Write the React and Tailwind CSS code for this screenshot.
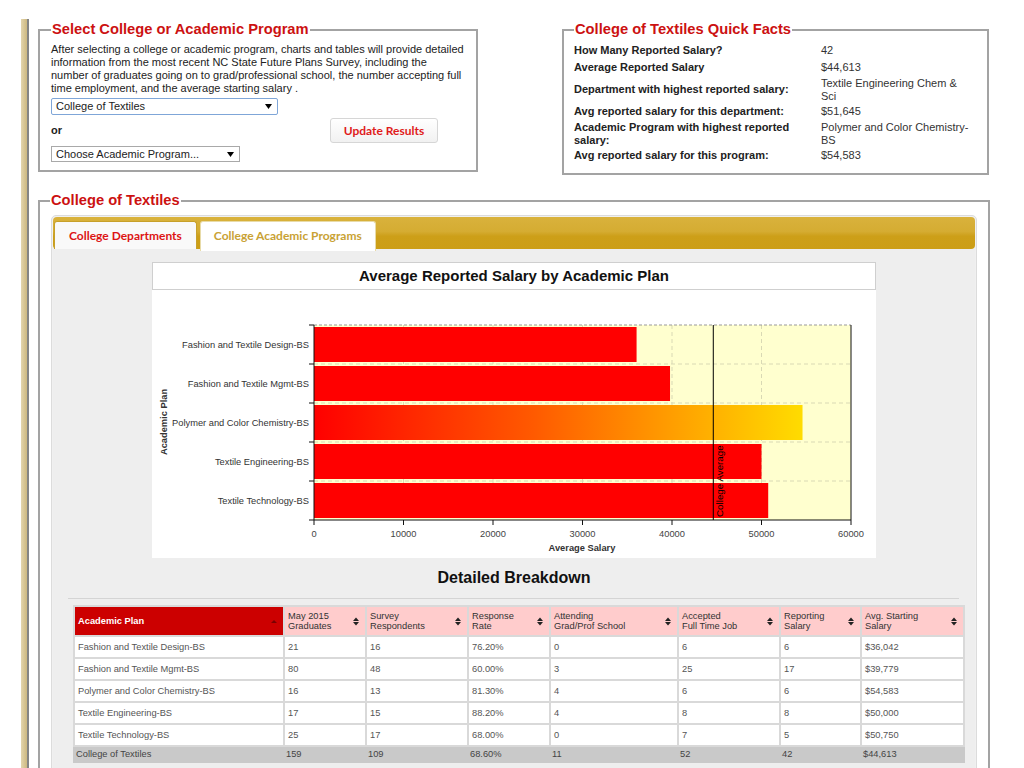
import React from "react";

const plans = [
  ["Fashion and Textile Design-BS", 36042],
  ["Fashion and Textile Mgmt-BS", 39779],
  ["Polymer and Color Chemistry-BS", 54583],
  ["Textile Engineering-BS", 50000],
  ["Textile Technology-BS", 50750],
];

const rows = [
  ["Fashion and Textile Design-BS", "21", "16", "76.20%", "0", "6", "6", "$36,042"],
  ["Fashion and Textile Mgmt-BS", "80", "48", "60.00%", "3", "25", "17", "$39,779"],
  ["Polymer and Color Chemistry-BS", "16", "13", "81.30%", "4", "6", "6", "$54,583"],
  ["Textile Engineering-BS", "17", "15", "88.20%", "4", "8", "8", "$50,000"],
  ["Textile Technology-BS", "25", "17", "68.00%", "0", "7", "5", "$50,750"],
];

const totals = ["College of Textiles", "159", "109", "68.60%", "11", "52", "42", "$44,613"];

const headers = [
  ["May 2015", "Graduates"],
  ["Survey", "Respondents"],
  ["Response", "Rate"],
  ["Attending", "Grad/Prof School"],
  ["Accepted", "Full Time Job"],
  ["Reporting", "Salary"],
  ["Avg. Starting", "Salary"],
];

const colWidths = [210, 82, 102, 82, 128, 102, 81, 103];

// [label, value, two-line row]
const facts = [
  ["How Many Reported Salary?", "42", false],
  ["Average Reported Salary", "$44,613", false],
  ["Department with highest reported salary:", "Textile Engineering Chem & Sci", true],
  ["Avg reported salary for this department:", "$51,645", false],
  ["Academic Program with highest reported salary:", "Polymer and Color Chemistry-BS", true],
  ["Avg reported salary for this program:", "$54,583", false],
];

function Arrow() {
  return (
    <svg width="7" height="5" viewBox="0 0 7 5">
      <polygon points="0,0 7,0 3.5,5" fill="#000" />
    </svg>
  );
}

function SortIcon() {
  return (
    <svg width="6" height="9" viewBox="0 0 6 9" className="shrink-0">
      <polygon points="0,4 3,0.5 6,4" fill="#222" />
      <polygon points="0,5 6,5 3,8.5" fill="#222" />
    </svg>
  );
}

function Chart() {
  const x0 = 162;
  const x1 = 699;
  const y0 = 35;
  const y1 = 230;
  const sx = (v) => x0 + (v / 60000) * (x1 - x0);
  const band = 39;
  const avg = sx(44613);

  return (
    <svg width="724" height="268" viewBox="0 0 724 268" style={{ fontFamily: '"Liberation Sans", Arial, sans-serif' }}>
      <defs>
        <linearGradient id="hot" x1="0" y1="0" x2="1" y2="0">
          <stop offset="0" stopColor="#ff0000" />
          <stop offset="0.45" stopColor="#ff5a00" />
          <stop offset="0.75" stopColor="#ffa200" />
          <stop offset="1" stopColor="#ffdc00" />
        </linearGradient>
      </defs>
      <rect x={x0} y={y0} width={x1 - x0} height={y1 - y0} fill="#ffffcf" />
      {[1, 2, 3, 4, 5].map((i) => (
        <line key={"v" + i} x1={sx(i * 10000)} x2={sx(i * 10000)} y1={y0} y2={y1} stroke="#d9d9b4" strokeDasharray="4 3" />
      ))}
      {[1, 2, 3, 4].map((i) => (
        <line key={"h" + i} x1={x0} x2={x1} y1={y0 + band * i} y2={y0 + band * i} stroke="#d9d9b4" strokeDasharray="4 3" />
      ))}
      <line x1={x0} x2={x1} y1={y0} y2={y0} stroke="#999" strokeDasharray="3 2" />
      {plans.map(([name, v], i) => (
        <rect
          key={name}
          x={x0}
          y={y0 + band * i + 2}
          width={sx(v) - x0}
          height={35}
          fill={i === 2 ? "url(#hot)" : "#ff0000"}
        />
      ))}
      <line x1={avg} x2={avg} y1={y0} y2={y1} stroke="#000" strokeWidth="1" />
      <text transform={`translate(${avg + 10},${y1 - 3}) rotate(-90)`} fontSize="9.8" fill="#000">
        College Average
      </text>
      <line x1={x0} x2={x0} y1={y0} y2={y1} stroke="#111" />
      <line x1={x1} x2={x1} y1={y0} y2={y1} stroke="#111" />
      <line x1={x0} x2={x1} y1={y1} y2={y1} stroke="#111" />
      {[0, 1, 2, 3, 4, 5].map((i) => (
        <line key={"yt" + i} x1={x0 - 5} x2={x0} y1={y0 + band * i} y2={y0 + band * i} stroke="#111" />
      ))}
      {[0, 1, 2, 3, 4, 5, 6].map((i) => (
        <g key={"xt" + i}>
          <line x1={sx(i * 10000)} x2={sx(i * 10000)} y1={y1} y2={y1 + 5} stroke="#111" />
          <text x={sx(i * 10000)} y={y1 + 17} fontSize="9.3" fill="#444" textAnchor="middle">
            {i * 10000}
          </text>
        </g>
      ))}
      {plans.map(([name], i) => (
        <text key={"l" + name} x={x0 - 5} y={y0 + band * i + 23} fontSize="9.3" fill="#333" textAnchor="end">
          {name}
        </text>
      ))}
      <text x="430" y="261" fontSize="9.3" fontWeight="bold" fill="#333" textAnchor="middle">
        Average Salary
      </text>
      <text transform="translate(15,132) rotate(-90)" fontSize="9.3" fontWeight="bold" fill="#333" textAnchor="middle">
        Academic Plan
      </text>
    </svg>
  );
}

export default function App() {
  return (
    <div className="min-h-screen bg-white pt-[19px] pl-[21px] text-[#222]" style={{ fontFamily: '"Liberation Sans", Arial, sans-serif' }}>
      <div className="flex">
        <div className="w-[8px] shrink-0 self-stretch bg-[linear-gradient(to_right,#e3d5ad,#cdb880)] border-r-2 border-[#858585]" />

        <div className="ml-[9px] w-[952px] pt-[2px] pb-[40px]">
          {/* top row */}
          <div className="flex items-start gap-[84px]">
            <fieldset className="w-[440px] shrink-0 border-2 border-[#a3a3a3] px-[11px] pb-[8px]">
              <legend className="text-[14.7px] leading-[17px] font-bold text-[#cc1111] px-px">Select College or Academic Program</legend>
              <p className="text-[11px] leading-[13px] pt-[5px]">
                After selecting a college or academic program, charts and tables will provide detailed information from the most recent NC State Future Plans Survey, including the number of graduates going on to grad/professional school, the number accepting full time employment, and the average starting salary .
              </p>
              <div className="mt-[3px] w-[227px] h-[17px] border border-[#7fa6d8] rounded-[2px] flex items-center justify-between pl-[4px] pr-[5px] text-[11px] leading-[13px]">
                <span>College of Textiles</span>
                <Arrow />
              </div>
              <div className="flex items-start mt-[3px]">
                <div className="w-[279px]">
                  <div className="h-[28px] pt-[6px] text-[11px] leading-[13px] font-bold">or</div>
                  <div className="w-[189px] h-[16px] border border-[#a9a9a9] flex items-center justify-between pl-[4px] pr-[5px] text-[11px] leading-[13px]">
                    <span>Choose Academic Program...</span>
                    <Arrow />
                  </div>
                </div>
                <div
                  className="w-[108px] h-[25px] rounded-[3px] border border-[#d6d6d6] bg-[linear-gradient(to_bottom,#ffffff,#f1f1f1)] flex items-center justify-center text-[12px] font-bold text-[#e01b1b]"
                  style={{ fontFamily: "Lato, sans-serif" }}
                >
                  Update Results
                </div>
              </div>
            </fieldset>

            <fieldset className="w-[427px] shrink-0 border-2 border-[#a3a3a3] px-[10px] pb-[9px]">
              <legend className="text-[14.7px] leading-[17px] font-bold text-[#cc1111] px-px">College of Textiles Quick Facts</legend>
              <div className="pt-[4px] text-[11px] leading-[13px]">
                {facts.map(([k, v, two]) => (
                  <div key={k} className={`flex items-center ${two ? "h-[27px]" : "h-[17px]"}`}>
                    <div className="w-[247px] font-bold pr-[20px]">{k}</div>
                    <div className="w-[150px] text-[#333]">{v}</div>
                  </div>
                ))}
              </div>
            </fieldset>
          </div>

          {/* college section */}
          <fieldset className="mt-[17px] border-2 border-[#a3a3a3] px-[11px] pt-[6px]">
            <legend className="text-[14.7px] leading-[17px] font-bold text-[#cc1111] px-px -ml-px">College of Textiles</legend>
            <div className="border border-[#dcdcdc] rounded-[5px] bg-[#f0f0f0] p-px">
              <div className="h-[32px] rounded-[4px] bg-[linear-gradient(to_bottom,#d9b23c_0%,#d5ac32_45%,#cd9f18_60%,#cc9e16_100%)] flex items-end pl-px gap-[3px]" style={{ fontFamily: "Lato, sans-serif" }}>
                <div className="h-[28px] px-[14px] flex items-center border border-b-0 border-[#c7a02a] rounded-t-[3px] bg-[#f9f9f9] text-[12px] font-bold text-[#dd1414]">
                  College Departments
                </div>
                <div className="h-[30px] -mb-[2px] px-[13px] pb-[2px] flex items-center border border-b-0 border-[#e8dba8] rounded-t-[3px] bg-white text-[12px] font-bold text-[#c9a234]">
                  College Academic Programs
                </div>
              </div>

              <div className="pt-[13px] pb-[30px] bg-[#eeeeee]">
                <div className="mx-auto w-[724px] bg-white">
                  <div className="h-[28px] border border-[#cfcfcf] flex items-center justify-center text-[15px] font-bold text-[#111]">
                    Average Reported Salary by Academic Plan
                  </div>
                  <Chart />
                </div>

                <div className="mt-[11px] text-center text-[16px] leading-[18px] font-bold text-[#111]">Detailed Breakdown</div>
                <div className="mt-[11px] ml-[15px] mr-[16px] border-t border-[#d4d4d4]" />

                <table className="mt-[6px] ml-[20px] w-[890px] table-fixed border-collapse text-[9.3px] leading-[10.5px]">
                  <colgroup>
                    {colWidths.map((w, i) => (
                      <col key={i} style={{ width: w }} />
                    ))}
                  </colgroup>
                  <thead>
                    <tr className="h-[30px]">
                      <th className="border-2 border-[#d9d9d9] bg-[#cc0000] text-white font-bold text-left pl-[3px] pr-[6px]">
                        <div className="flex items-center justify-between">
                          <span>Academic Plan</span>
                          <svg width="6" height="3" viewBox="0 0 6 3">
                            <polygon points="0,3 3,0 6,3" fill="#7a0000" />
                          </svg>
                        </div>
                      </th>
                      {headers.map(([a, b]) => (
                        <th key={a} className="border-2 border-[#d9d9d9] bg-[#ffcccc] text-[#333] font-normal text-left pl-[3px] pr-[6px]">
                          <div className="flex items-center justify-between">
                            <span>
                              {a}
                              <br />
                              {b}
                            </span>
                            <SortIcon />
                          </div>
                        </th>
                      ))}
                    </tr>
                  </thead>
                  <tbody>
                    {rows.map((r) => (
                      <tr key={r[0]} className="h-[22px]">
                        {r.map((c, i) => (
                          <td key={i} className="border-2 border-[#d9d9d9] bg-white text-[#555] pl-[3px] whitespace-nowrap">
                            {c}
                          </td>
                        ))}
                      </tr>
                    ))}
                    <tr className="h-[16px]">
                      {totals.map((c, i) => (
                        <td key={i} className="border-2 border-[#c9c9c9] bg-[#c9c9c9] text-[#444] pl-[1px] whitespace-nowrap">
                          {c}
                        </td>
                      ))}
                    </tr>
                  </tbody>
                </table>
              </div>
            </div>
          </fieldset>
        </div>
      </div>
    </div>
  );
}
